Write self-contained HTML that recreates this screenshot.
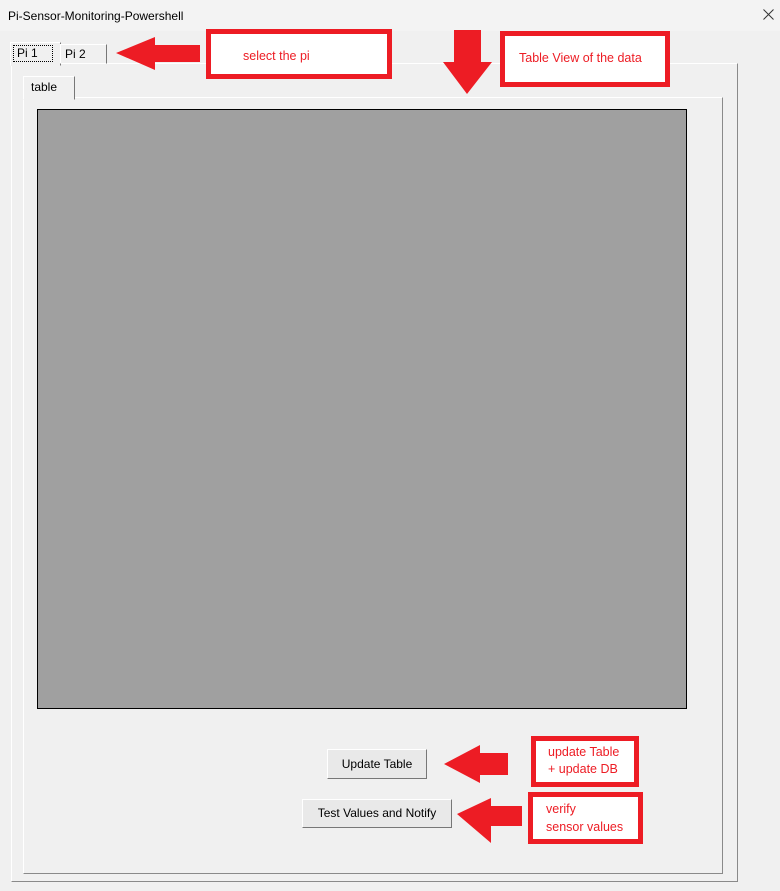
<!DOCTYPE html>
<html><head><style>
body{margin:0;width:780px;height:891px;background:#f0f0f0;font-family:"Liberation Sans",sans-serif;position:relative;overflow:hidden}
.a{position:absolute}
.title{left:0;top:0;width:780px;height:31px;background:#f3f3f3;font-size:12px;color:#000}
.rb{position:absolute;background:#fff;border:5px solid #ed1c24;color:#ed1c24;font-size:12.5px;box-sizing:border-box}
.btn{position:absolute;background:#e9e9e9;border:1px solid;border-color:#fff #777 #777 #fff;box-sizing:border-box;font-size:12px;text-align:center;color:#000}
</style></head><body>
<div class="a title"><span class="a" style="left:8px;top:9px">Pi-Sensor-Monitoring-Powershell</span>
<svg class="a" style="left:763px;top:9px" width="11" height="11"><path d="M0.5 0.5L10.5 10.5M10.5 0.5L0.5 10.5" stroke="#333" stroke-width="1"/></svg></div>
<!-- outer tab panel -->
<div class="a" style="left:11px;top:63px;width:725px;height:817px;border:1px solid;border-color:#fff #8a8a8a #8a8a8a #fff"></div>
<div class="a" style="left:10px;top:42px;width:49px;height:22px;border:1px solid;border-color:#fff #777 transparent #fff;background:#f0f0f0;font-size:12px"><span class="a" style="left:2px;top:2px;border:1px dotted #000;padding:0 14px 1px 3px">Pi 1</span></div>
<div class="a" style="left:60px;top:44px;width:45px;height:18px;border:1px solid;border-color:#fff #777 transparent #fff;font-size:12px"><span class="a" style="left:4px;top:2px">Pi 2</span></div>
<!-- inner tab panel -->
<div class="a" style="left:23px;top:97px;width:698px;height:775px;border:1px solid;border-color:#fff #8a8a8a #8a8a8a #fff"></div>
<div class="a" style="left:23px;top:76px;width:50px;height:22px;border:1px solid;border-color:#fff #777 transparent #fff;background:#f0f0f0;font-size:12px"><span class="a" style="left:7px;top:3px">table</span></div>
<div class="a" style="left:37px;top:109px;width:648px;height:598px;background:#a0a0a0;border:1px solid #000"></div>
<div class="btn" style="left:327px;top:749px;width:100px;height:30px;line-height:28px">Update Table</div>
<div class="btn" style="left:302px;top:799px;width:150px;height:29px;line-height:27px">Test Values and Notify</div>
<svg class="a" style="left:0;top:0" width="780" height="891">
<g fill="#ed1c24">
<polygon points="116,53 155,37 155,45 200,45 200,62 155,62 155,70"/>
<polygon points="454,30 481,30 481,62 492,62 467,94 443,62 454,62"/>
<polygon points="444,764 480,745 480,753 508,753 508,775 480,775 480,783"/>
<polygon points="457,814 491,798 491,806 522,806 522,826 491,826 491,843"/>
</g></svg>
<div class="rb" style="left:206px;top:29px;width:186px;height:50px"><span class="a" style="left:32px;top:15px">select the pi</span></div>
<div class="rb" style="left:500px;top:31px;width:170px;height:56px"><span class="a" style="left:14px;top:15px">Table View of the data</span></div>
<div class="rb" style="left:531px;top:736px;width:108px;height:51px;line-height:17px"><span class="a" style="left:12px;top:3px">update Table<br>+ update DB</span></div>
<div class="rb" style="left:528px;top:792px;width:115px;height:52px;line-height:18px"><span class="a" style="left:13px;top:3px">verify<br>sensor values</span></div>
</body></html>
